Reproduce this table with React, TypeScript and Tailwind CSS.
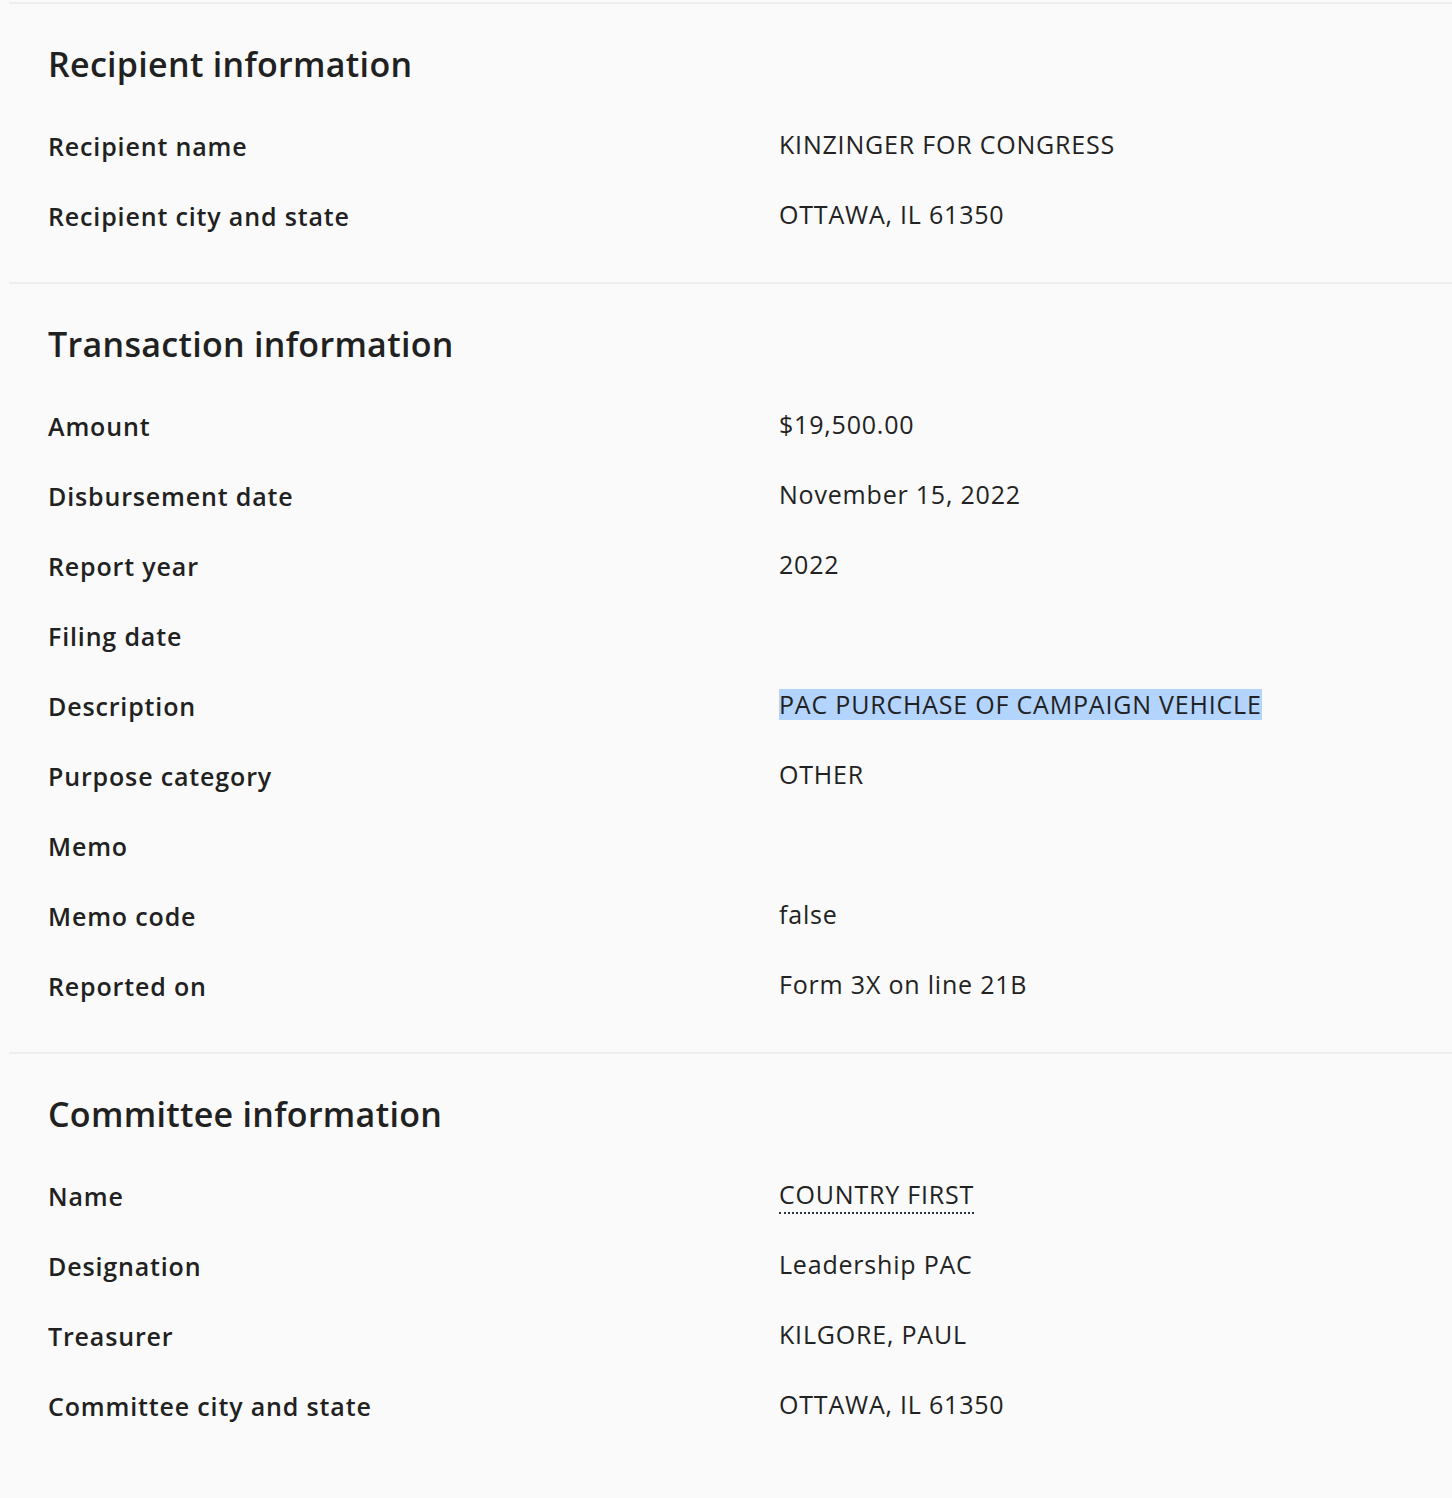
const font = { fontFamily: '"Open Sans", "Liberation Sans", sans-serif' }

type Row = { label: string; value?: React.ReactNode }

const sections: { title: string; rows: Row[] }[] = [
  {
    title: 'Recipient information',
    rows: [
      { label: 'Recipient name', value: 'KINZINGER FOR CONGRESS' },
      { label: 'Recipient city and state', value: 'OTTAWA, IL 61350' },
    ],
  },
  {
    title: 'Transaction information',
    rows: [
      { label: 'Amount', value: '$19,500.00' },
      { label: 'Disbursement date', value: 'November 15, 2022' },
      { label: 'Report year', value: '2022' },
      { label: 'Filing date' },
      { label: 'Description', value: <span className="inline-block bg-[#b3d4fd] leading-[31px]">PAC PURCHASE OF CAMPAIGN VEHICLE</span> },
      { label: 'Purpose category', value: 'OTHER' },
      { label: 'Memo' },
      { label: 'Memo code', value: 'false' },
      { label: 'Reported on', value: 'Form 3X on line 21B' },
    ],
  },
  {
    title: 'Committee information',
    rows: [
      { label: 'Name', value: <span className="border-b-2 border-dotted border-[#2a3440] pb-[1px]">COUNTRY FIRST</span> },
      { label: 'Designation', value: 'Leadership PAC' },
      { label: 'Treasurer', value: 'KILGORE, PAUL' },
      { label: 'Committee city and state', value: 'OTTAWA, IL 61350' },
    ],
  },
]

export default function App() {
  return (
    <div className="min-h-[1498px] bg-[#fafafa] pt-[2px] text-[#212121]" style={font}>
      {sections.map(s => (
        <section key={s.title} className="ml-[9px] border-t-2 border-[#eeeeee] pl-[39px] pt-[38px] pb-[30px]">
          <h2 className="h-[44px] text-[34px] font-semibold leading-[44px] tracking-[0.3px]">{s.title}</h2>
          <div className="mt-[26px]">
            {s.rows.map(r => (
              <div key={r.label} className="flex h-[70px] items-center">
                <div className="w-[731px] text-[25px] font-semibold tracking-[0.85px]">{r.label}</div>
                <div className="-mt-[4px] text-[25px] tracking-[0.8px] text-[#222]">{r.value}</div>
              </div>
            ))}
          </div>
        </section>
      ))}
    </div>
  )
}
